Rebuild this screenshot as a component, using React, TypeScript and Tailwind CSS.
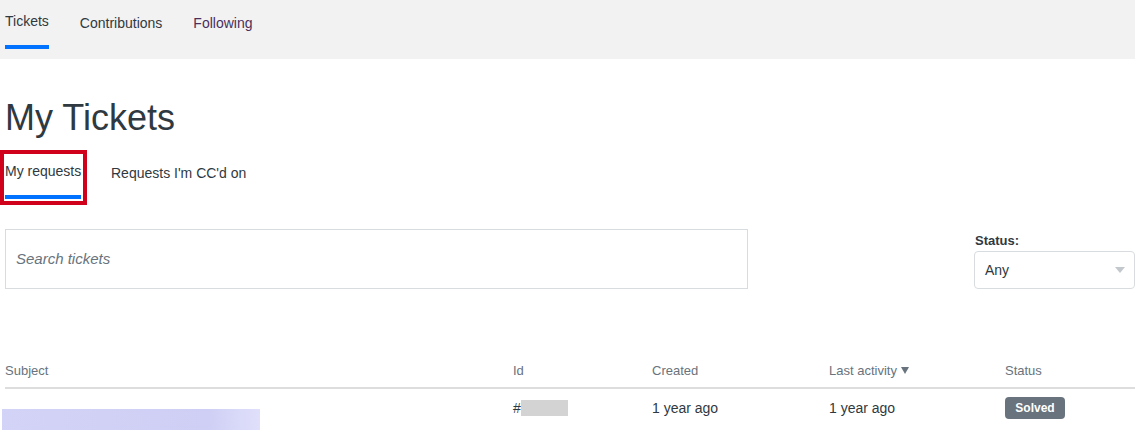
import React from "react";

export default function App() {
  const font = { fontFamily: '"Liberation Sans", Arial, sans-serif' };
  return (
    <div className="w-[1135px] h-[447px] overflow-hidden bg-white text-[#2f3941]" style={font}>
      {/* Top nav */}
      <div className="h-[59px] bg-[#f2f2f2] flex items-start pl-[5px] gap-[31px]">
        <div className="pt-[11px] flex flex-col">
          <span className="text-[14px] leading-[20px] text-[#2f3941]">Tickets</span>
          <div className="mt-[14px] h-[4px] bg-[#0072ff]" />
        </div>
        <div className="pt-[11px]">
          <span className="text-[14px] leading-[20px] text-[#2f3941]">Contributions</span>
        </div>
        <div className="pt-[11px]">
          <span className="text-[14px] leading-[20px] text-[#4a2f5c]">Following</span>
        </div>
      </div>

      {/* Heading */}
      <h1 className="pl-[5px] mt-[37px] text-[36px] leading-[44px] font-normal text-[#2f3941]">My Tickets</h1>

      {/* Sub tabs */}
      <div className="mt-[10px] flex items-start">
        <div className="border-[4px] border-[#d0021b] w-[87px] h-[55px] pl-[1px] pt-[7px] flex flex-col">
          <span className="text-[14px] leading-[20px] text-[#2f3941]">My requests</span>
          <div className="mt-[14px] h-[4px] w-[76px] bg-[#0072ff]" />
        </div>
        <div className="ml-[24px] pt-[11px]">
          <span className="text-[14px] leading-[20px] text-[#2f3941]">Requests I'm CC'd on</span>
        </div>
      </div>

      {/* Search + status */}
      <div className="mt-[24px] flex items-end pl-[5px]">
        <div className="w-[743px] h-[60px] border border-[#d8dcde] flex items-center pl-[10px]">
          <span className="italic text-[15px] text-[#68737d]">Search tickets</span>
        </div>
        <div className="ml-auto w-[161px] flex flex-col">
          <span className="pl-[1px] text-[13px] font-bold leading-[16px] text-[#2f3941]">Status:</span>
          <div className="mt-[2px] h-[38px] border border-[#d8dcde] rounded-[4px] flex items-center pl-[10px] pr-[9px]">
            <span className="text-[14px] text-[#2f3941]">Any</span>
            <svg className="ml-auto" width="10" height="6" viewBox="0 0 10 6">
              <path d="M0 0 L10 0 L5 6 Z" fill="#c2c8cc" />
            </svg>
          </div>
        </div>
      </div>

      {/* Table */}
      <div className="mt-[66px] pl-[5px]">
        <div className="flex h-[34px] items-start pt-[8px] leading-[15px] border-b-2 border-[#dddddd] text-[13px] text-[#68737d]">
          <div className="w-[508px]">Subject</div>
          <div className="w-[139px]">Id</div>
          <div className="w-[177px]">Created</div>
          <div className="w-[176px] flex items-center gap-[4px]">
            Last activity
            <svg width="8" height="7" viewBox="0 0 8 7"><path d="M0 0 L8 0 L4 7 Z" fill="#68737d" /></svg>
          </div>
          <div className="flex-1">Status</div>
        </div>
        <div className="flex items-start pt-[8px] text-[14px] text-[#2f3941]">
          <div className="w-[508px] relative">
            <div className="absolute left-[-3px] top-[12px] w-[258px] h-[21px] bg-gradient-to-r from-[#d3d3f7] via-[#cfcff5] via-80% to-[#e0e0fb]" />
          </div>
          <div className="w-[139px] flex items-center h-[22px]">
            <span>#</span>
            <div className="w-[47px] h-[16px] bg-[#d3d3d3]" />
          </div>
          <div className="w-[177px] leading-[22px]">1 year ago</div>
          <div className="w-[176px] leading-[22px]">1 year ago</div>
          <div className="flex-1">
            <span className="inline-flex items-center justify-center w-[60px] h-[22px] rounded-[4px] bg-[#68737d] text-white text-[12px] font-bold">Solved</span>
          </div>
        </div>
      </div>
    </div>
  );
}
